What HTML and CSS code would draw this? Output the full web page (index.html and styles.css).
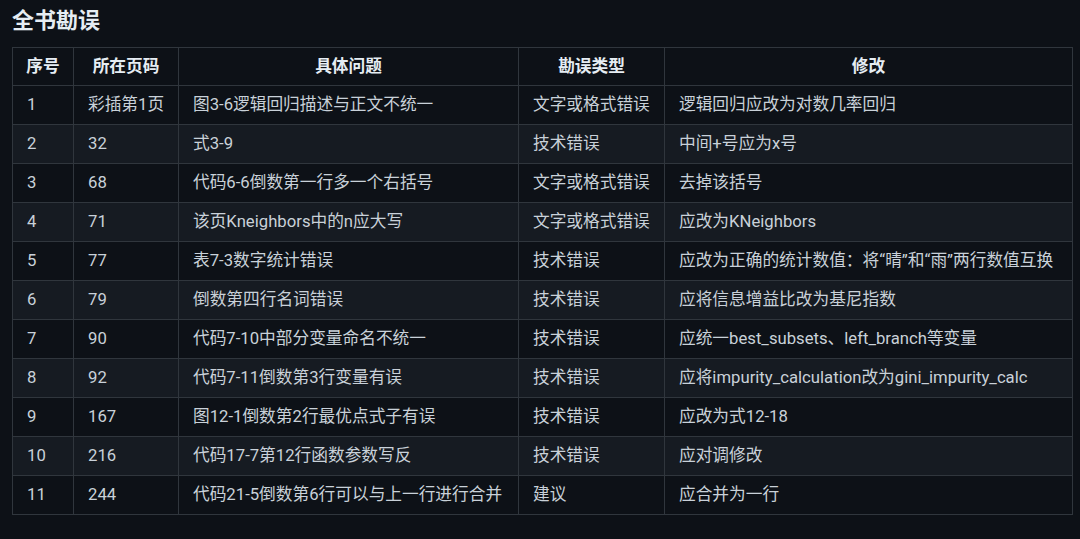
FILE: index.html
```html
<!DOCTYPE html>
<html lang="zh-CN">
<head>
<meta charset="utf-8">
<title>全书勘误</title>
<link rel="stylesheet" href="styles.css">
</head>
<body>
<div class="page">
  <h2 class="title">全书勘误</h2>
  <table class="errata">
    <colgroup>
      <col class="c-no">
      <col class="c-page">
      <col class="c-issue">
      <col class="c-type">
      <col class="c-fix">
    </colgroup>
    <thead>
      <tr><th>序号</th><th>所在页码</th><th>具体问题</th><th>勘误类型</th><th>修改</th></tr>
    </thead>
    <tbody>
      <tr><td>1</td><td>彩插第1页</td><td>图3-6逻辑回归描述与正文不统一</td><td>文字或格式错误</td><td>逻辑回归应改为对数几率回归</td></tr>
      <tr><td>2</td><td>32</td><td>式3-9</td><td>技术错误</td><td>中间+号应为x号</td></tr>
      <tr><td>3</td><td>68</td><td>代码6-6倒数第一行多一个右括号</td><td>文字或格式错误</td><td>去掉该括号</td></tr>
      <tr><td>4</td><td>71</td><td>该页Kneighbors中的n应大写</td><td>文字或格式错误</td><td>应改为KNeighbors</td></tr>
      <tr><td>5</td><td>77</td><td>表7-3数字统计错误</td><td>技术错误</td><td>应改为正确的统计数值：将“晴”和“雨”两行数值互换</td></tr>
      <tr><td>6</td><td>79</td><td>倒数第四行名词错误</td><td>技术错误</td><td>应将信息增益比改为基尼指数</td></tr>
      <tr><td>7</td><td>90</td><td>代码7-10中部分变量命名不统一</td><td>技术错误</td><td>应统一best_subsets、left_branch等变量</td></tr>
      <tr><td>8</td><td>92</td><td>代码7-11倒数第3行变量有误</td><td>技术错误</td><td>应将impurity_calculation改为gini_impurity_calc</td></tr>
      <tr><td>9</td><td>167</td><td>图12-1倒数第2行最优点式子有误</td><td>技术错误</td><td>应改为式12-18</td></tr>
      <tr><td>10</td><td>216</td><td>代码17-7第12行函数参数写反</td><td>技术错误</td><td>应对调修改</td></tr>
      <tr><td>11</td><td>244</td><td>代码21-5倒数第6行可以与上一行进行合并</td><td>建议</td><td>应合并为一行</td></tr>
    </tbody>
  </table>
</div>
</body>
</html>
```
FILE: styles.css
```css
html, body {
  margin: 0;
  padding: 0;
  background: #0d1117;
}
body {
  font-family: "Roboto", "Noto Sans CJK SC", "Noto Sans", sans-serif;
  color: #c9d1d9;
}
.page {
  padding: 4px 8px 0 12px;
}
.title {
  margin: 0;
  font-family: "Noto Sans CJK SC", sans-serif;
  font-size: 22px;
  line-height: 28px;
  font-weight: 700;
  color: #e6edf3;
}
.errata {
  margin-top: 15px;
  border-collapse: collapse;
  table-layout: fixed;
  width: 1060px;
  font-size: 16.7px;
}
.c-no { width: 61px; }
.c-page { width: 105px; }
.c-issue { width: 340px; }
.c-type { width: 146px; }
.c-fix { width: 408px; }
.errata th,
.errata td {
  border: 1px solid #30363d;
  padding: 0 0 0 14px;
  height: 38px;
  line-height: 22px;
  text-align: left;
  white-space: nowrap;
  overflow: hidden;
}
.errata th {
  height: 37px;
  text-align: center;
  padding: 0;
  font-weight: 700;
  color: #e6edf3;
}
.errata tbody tr:nth-child(even) {
  background: #161b22;
}
```
